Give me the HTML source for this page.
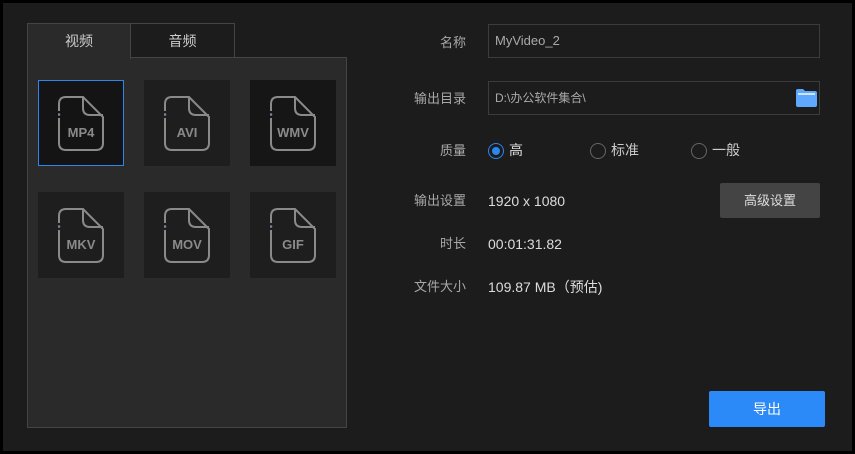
<!DOCTYPE html>
<html><head><meta charset="utf-8"><style>
*{margin:0;padding:0;box-sizing:border-box}
body{width:855px;height:454px;background:#000;font-family:"Liberation Sans","Noto Sans CJK SC",sans-serif;overflow:hidden;position:relative}
.win{position:absolute;left:3px;top:3px;width:849px;height:448px;background:#1c1c1c}
.abs{position:absolute}
.tab{position:absolute;top:23px;height:35px;font-size:14px;text-align:center;line-height:34px;border:1px solid #444}
.panel{position:absolute;left:27px;top:57px;width:320px;height:371px;background:#2a2a2a;border:1px solid #444}
.tile{position:absolute;width:86px;height:86px;background:#1e1e1e}
.tile svg{position:absolute;left:20px;top:16px}
.lbl{position:absolute;right:389px;font-size:13px;color:#a8a8a8;white-space:nowrap;line-height:16px}
.val{position:absolute;left:488px;font-size:14px;color:#ddd;white-space:nowrap;line-height:16px}
.inp{position:absolute;left:488px;width:332px;height:34px;border:1px solid #3c3c3c;background:#1c1c1c;color:#aaa;font-size:13px;padding-left:6px;line-height:32px}
.radio{position:absolute;top:143px;width:16px;height:16px;border-radius:50%;border:1.5px solid #666}
</style></head><body>
<div class="win"></div>
<div class="tab" style="left:27px;width:104px;background:#2a2a2a;border-bottom:none;color:#ccc;z-index:2;height:36px">视频</div>
<div class="tab" style="left:130px;width:105px;background:#1c1c1c;color:#ccc">音频</div>
<div class="panel"></div>
<svg width="0" height="0" style="position:absolute"><defs>
<g id="f"><path d="M1 15 V8 Q1 1 8 1 H25 L45 21 V47 Q45 54 38 54 H8 Q1 54 1 47 V22" fill="none" stroke="#8a8a8a" stroke-width="2"/><path d="M25 1 V12 Q25 19 32 19 H45" fill="none" stroke="#8a8a8a" stroke-width="2"/><circle cx="1" cy="18.5" r="1.3" fill="#7a8aa0"/></g>
</defs></svg>
<div class="tile" style="left:38px;top:80px;background:#141414;border:1px solid #2b86f0"><svg width="48" height="58" style="left:19px;top:15px"><use href="#f"/><text x="23" y="41" fill="#8a8a8a" font-size="13" font-weight="bold" text-anchor="middle" font-family="Liberation Sans">MP4</text></svg></div>
<div class="tile" style="left:144px;top:80px"><svg width="48" height="58"><use href="#f"/><text x="23" y="41" fill="#8a8a8a" font-size="13" font-weight="bold" text-anchor="middle" font-family="Liberation Sans">AVI</text></svg></div>
<div class="tile" style="left:250px;top:80px;background:#161616"><svg width="48" height="58"><use href="#f"/><text x="23" y="41" fill="#8a8a8a" font-size="13" font-weight="bold" text-anchor="middle" font-family="Liberation Sans">WMV</text></svg></div>
<div class="tile" style="left:38px;top:192px"><svg width="48" height="58"><use href="#f"/><text x="23" y="41" fill="#8a8a8a" font-size="13" font-weight="bold" text-anchor="middle" font-family="Liberation Sans">MKV</text></svg></div>
<div class="tile" style="left:144px;top:192px"><svg width="48" height="58"><use href="#f"/><text x="23" y="41" fill="#8a8a8a" font-size="13" font-weight="bold" text-anchor="middle" font-family="Liberation Sans">MOV</text></svg></div>
<div class="tile" style="left:250px;top:192px"><svg width="48" height="58"><use href="#f"/><text x="23" y="41" fill="#8a8a8a" font-size="13" font-weight="bold" text-anchor="middle" font-family="Liberation Sans">GIF</text></svg></div>

<div class="lbl" style="top:35px">名称</div>
<div class="inp" style="top:24px">MyVideo_2</div>
<div class="lbl" style="top:91px">输出目录</div>
<div class="inp" style="top:81px;font-size:12px">D:\办公软件集合\</div>
<svg class="abs" style="left:796px;top:89px" width="21" height="18"><path d="M0 2 Q0 0 2 0 H7 L9 2 H19 Q21 2 21 4 V16 Q21 18 19 18 H2 Q0 18 0 16Z" fill="#5ea8ff"/><rect x="2" y="4" width="17" height="2" fill="#cfe4ff"/></svg>
<div class="lbl" style="top:143px">质量</div>
<div class="radio" style="left:488px;border-color:#2b86f0"><div style="position:absolute;left:2.5px;top:2.5px;width:8px;height:8px;border-radius:50%;background:#2b86f0"></div></div>
<div class="val" style="left:509px;top:142px">高</div>
<div class="radio" style="left:590px"></div>
<div class="val" style="left:611px;top:142px;color:#ccc">标准</div>
<div class="radio" style="left:691px"></div>
<div class="val" style="left:712px;top:142px;color:#ccc">一般</div>
<div class="lbl" style="top:193px">输出设置</div>
<div class="val" style="top:193px">1920 x 1080</div>
<div class="abs" style="left:720px;top:183px;width:100px;height:35px;background:#444;border-radius:2px;color:#ddd;font-size:13px;text-align:center;line-height:35px">高级设置</div>
<div class="lbl" style="top:236px">时长</div>
<div class="val" style="top:236px">00:01:31.82</div>
<div class="lbl" style="top:279px">文件大小</div>
<div class="val" style="top:279px">109.87 MB（预估)</div>
<div class="abs" style="left:709px;top:391px;width:116px;height:36px;background:#2b8af7;border-radius:2px;color:#fff;font-size:14px;text-align:center;line-height:36px">导出</div>
</body></html>
